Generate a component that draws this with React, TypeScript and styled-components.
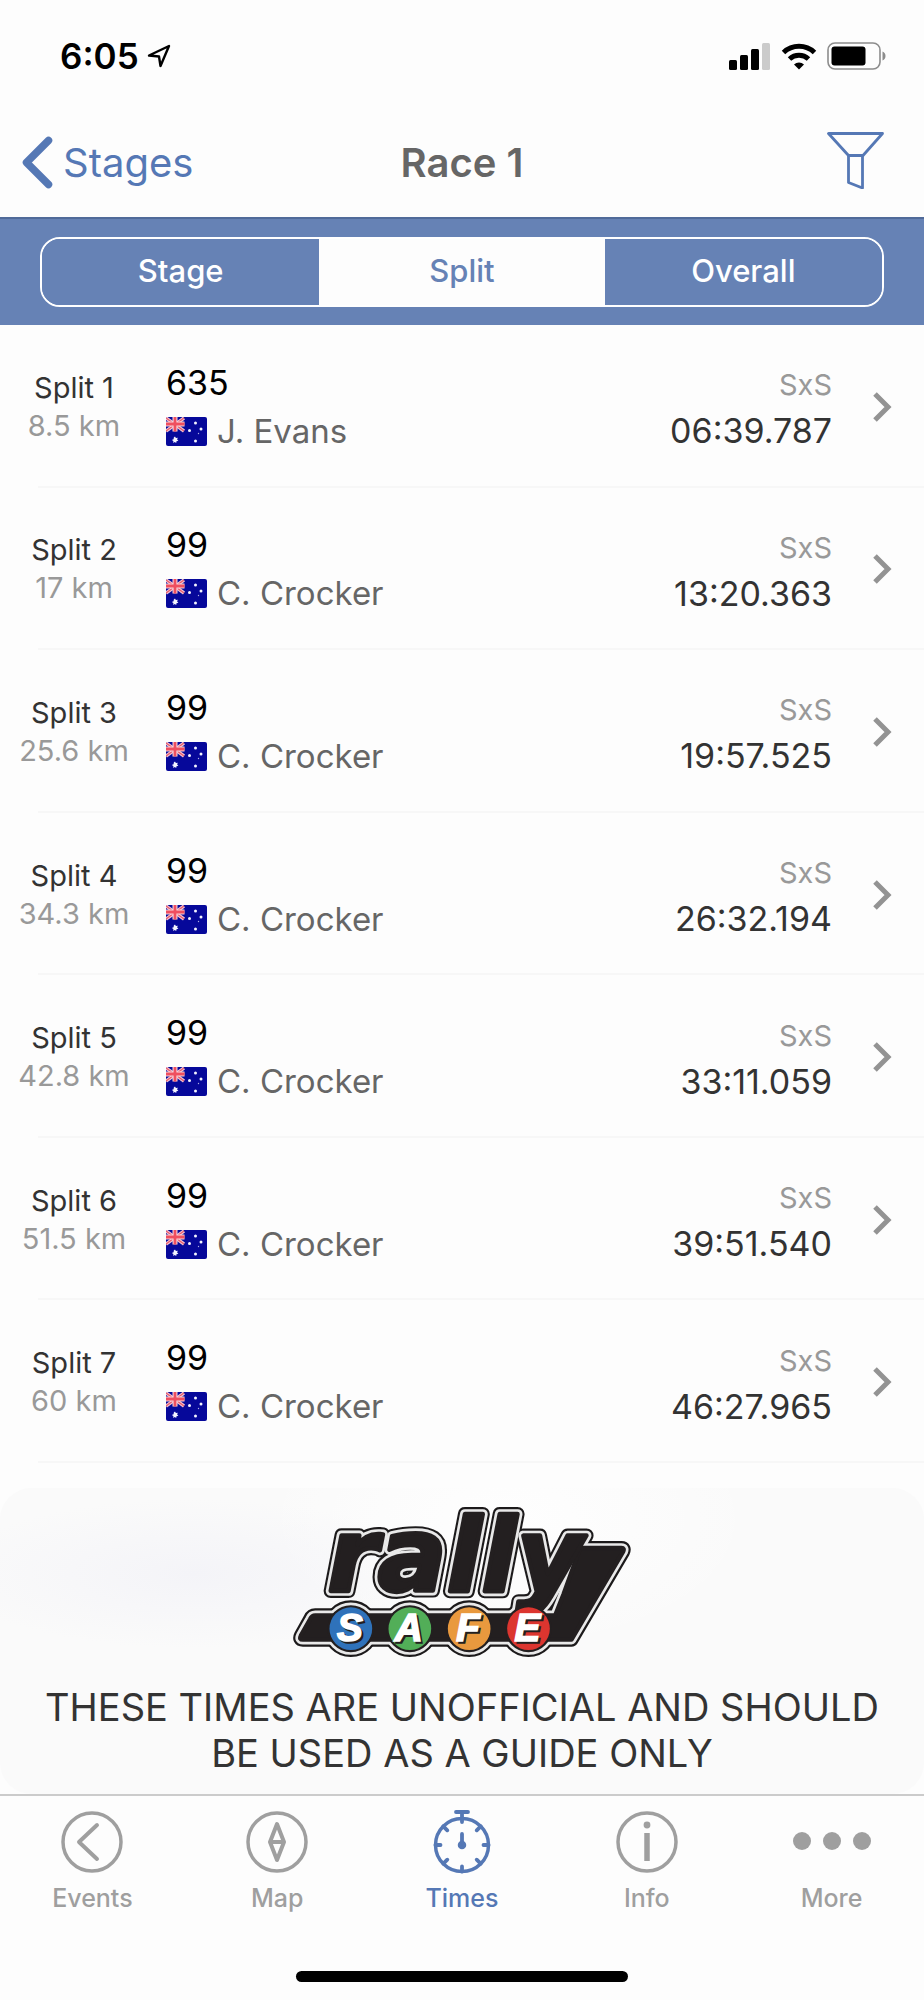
import React, { useState } from "react";
import styled, { createGlobalStyle } from "styled-components";

const blue = "#6682b5";
const accent = "#5578b5";
const grey = "#9f9f9f";

const GlobalStyle = createGlobalStyle`
  * { box-sizing: border-box; }
  body {
    margin: 0;
    background: #fdfdfd;
    color: #333;
    font-family: Inter, "Liberation Sans", sans-serif;
  }
  button { font: inherit; color: inherit; border: 0; padding: 0; background: none; cursor: pointer; }
  a { color: inherit; text-decoration: none; }
  svg { display: block; flex: none; }
`;

const Screen = styled.div`
  display: flex;
  flex-direction: column;
  min-height: 100vh;
`;

const StatusBar = styled.div`
  display: flex;
  align-items: center;
  justify-content: space-between;
  height: 112px;
  padding: 0 38px 0 60px;
  color: #000;
`;

const StatusGroup = styled.div<{ $gap: number }>`
  display: flex;
  align-items: center;
  gap: ${(p) => p.$gap}px;
`;

const Clock = styled.time`
  font-size: 35px;
  font-weight: 600;
  line-height: 40px;
`;

const NavBar = styled.header`
  display: grid;
  grid-template-columns: 1fr auto 1fr;
  align-items: center;
  height: 105px;
  padding: 0 22px 4px;
`;

const BackLink = styled.a`
  display: flex;
  align-items: center;
  gap: 10px;
  justify-self: start;
  color: ${accent};
  font-size: 40px;
  line-height: 48px;
`;

const Title = styled.h1`
  margin: 0;
  color: #666;
  font-size: 40px;
  font-weight: 600;
  line-height: 48px;
`;

const FilterButton = styled.button`
  justify-self: end;
  && { padding: 0 18px 4px; }
`;

const SegmentBand = styled.div`
  padding: 18px 40px;
  background: ${blue};
  border-top: 2px solid #506a99;
`;

const Segments = styled.div`
  display: grid;
  grid-template-columns: 35fr 36fr 35fr;
  height: 70px;
  overflow: hidden;
  border: 2px solid #fff;
  border-radius: 20px;
`;

const Segment = styled.button<{ $active: boolean }>`
  && {
    padding-bottom: 3px;
    background: ${(p) => (p.$active ? "#fdfdfd" : blue)};
    color: ${(p) => (p.$active ? blue : "#fff")};
    font-size: 31px;
    font-weight: 500;
  }
`;

const SplitList = styled.ol`
  display: flex;
  flex: 1;
  flex-direction: column;
  margin: 0 0 25px;
  padding: 0;
  list-style: none;
`;

const SplitItem = styled.li`
  display: flex;
  flex: 1;
  flex-direction: column;
  &::after {
    content: "";
    height: 2px;
    margin-left: 38px;
    background: #f7f7f7;
  }
`;

const SplitRow = styled.a`
  display: grid;
  flex: 1;
  grid-template-columns: 148px 1fr auto 92px;
  align-items: center;
  min-height: 150px;
  padding-top: 3px;
`;

const SplitCell = styled.div`
  text-align: center;
  font-size: 29px;
  line-height: 38px;
`;

const Distance = styled.div`
  color: #999;
`;

const Driver = styled.div`
  padding-left: 18px;
  color: #666;
  font-size: 33px;
  line-height: 49px;
`;

const CarNumber = styled.div`
  color: #000;
  font-size: 34px;
`;

const DriverName = styled.div`
  display: flex;
  align-items: center;
  gap: 10px;
`;

const Result = styled.div`
  padding-top: 3px;
  text-align: right;
  color: #333;
  font-size: 34px;
  line-height: 46px;
`;

const VehicleClass = styled.div`
  color: #999;
  font-size: 29px;
`;

const ChevronCell = styled.div`
  display: flex;
  justify-content: center;
  padding-left: 8px;
`;

const Banner = styled.section`
  display: flex;
  flex-direction: column;
  align-items: center;
  gap: 25px;
  padding: 21px 40px 18px;
  border-radius: 32px;
  background:
    radial-gradient(ellipse at 21% 28%, #f4f4f8 0, rgba(250, 250, 252, 0) 24%),
    radial-gradient(ellipse at 55% 10%, #fefefe 0, rgba(254, 254, 254, 0) 35%),
    #fafafa;
`;

const Notice = styled.p`
  max-width: 860px;
  margin: 0;
  text-align: center;
  font-size: 38px;
  line-height: 46px;
`;

const TabBar = styled.nav`
  display: grid;
  grid-template-columns: repeat(5, 1fr);
  padding-top: 12px;
  border-top: 2px solid #cbcbcb;
`;

const Tab = styled.a<{ $active: boolean }>`
  display: flex;
  flex-direction: column;
  align-items: center;
  gap: 8px;
  color: ${(p) => (p.$active ? accent : grey)};
  font-size: 25px;
  font-weight: 500;
  line-height: 32px;
`;

const HomeArea = styled.div`
  display: flex;
  justify-content: center;
  padding: 57px 0 18px;
`;

const HomeIndicator = styled.div`
  width: 36%;
  height: 11px;
  border-radius: 6px;
  background: #000;
`;

const LocationIcon = () => (
  <svg width="24" height="24" viewBox="0 0 24 24" fill="none" stroke="#000" strokeWidth="2.4" strokeLinejoin="round">
    <path d="M2 11.5 22 2 13.5 22 12 12.5Z" />
  </svg>
);

const SignalIcon = () => (
  <svg width="42" height="27" viewBox="0 0 42 27">
    <rect x="0" y="17" width="8" height="10" rx="1.5" />
    <rect x="11" y="12" width="8" height="15" rx="1.5" />
    <rect x="22" y="6" width="8" height="21" rx="1.5" />
    <rect x="33" y="0" width="8" height="27" rx="1.5" fill="#cbcbcb" />
  </svg>
);

const WifiIcon = () => (
  <svg width="36" height="27" viewBox="0 0 36 27" fill="none" stroke="#000" strokeWidth="5">
    <path d="M2.5 9.5a22.5 22.5 0 0 1 31 0" />
    <path d="M8.5 16a14 14 0 0 1 19 0" />
    <path d="M18 26.5 13 21.5a7.5 7.5 0 0 1 10 0Z" fill="#000" stroke="none" />
  </svg>
);

const BatteryIcon = () => (
  <svg width="59" height="28" viewBox="0 0 59 28">
    <rect x="1" y="1" width="52" height="26" rx="7" fill="none" stroke="#8c8c8c" strokeWidth="1.6" />
    <rect x="4.5" y="4.5" width="34" height="19" rx="3" />
    <path d="M55.5 9.5c4 1.5 4 7.5 0 9Z" fill="#8c8c8c" />
  </svg>
);

const BackIcon = () => (
  <svg width="31" height="53" viewBox="0 0 31 53" fill="none" stroke={accent} strokeWidth="7.5" strokeLinecap="round" strokeLinejoin="round">
    <path d="M26.5 4.5 4.5 26.5 26.5 48.5" />
  </svg>
);

const FilterIcon = () => (
  <svg width="57" height="57" viewBox="0 0 57 57" fill="none" stroke={accent} strokeWidth="2.8" strokeLinejoin="round">
    <path d="M1.5 1.5h54L36 23.5H21.5Z" />
    <path d="M21.5 23.5v27L35.5 56V23.5" />
  </svg>
);

const RowChevron = () => (
  <svg width="20" height="30" viewBox="0 0 20 30" fill="none" stroke="#939393" strokeWidth="5">
    <path d="M3 2 16 15 3 28" />
  </svg>
);

const FlagIcon = () => (
  <svg width="41" height="29" viewBox="0 0 41 29" role="img" aria-label="Australia">
    <rect width="41" height="29" rx="2" fill="#06089a" />
    <path d="M0 1 18 14M18 1 0 14" stroke="#f3c3cf" strokeWidth="3.4" />
    <path d="M0 1 18 14M18 1 0 14" stroke="#e85a6c" strokeWidth="1.2" />
    <path d="M9 0v14.5M0 7h18.5" stroke="#f8d5dc" strokeWidth="5" />
    <path d="M9 0v14.5M0 7h18.5" stroke="#ef4f5f" strokeWidth="2.8" />
    <g fill="#f4f4ff">
      <path d="m9 19.5.9 1.6 1.9-.4-.7 1.8 1.3 1.3-1.9.4-.3 1.9-1.4-1.200-1.600 1 .2-1.900-1.600-1 1.800-.7.200-1.800Z" />
      <circle cx="29.5" cy="6" r="1.5" />
      <circle cx="23.5" cy="13.5" r="1.5" />
      <circle cx="35" cy="12" r="1.5" />
      <circle cx="32.5" cy="16.5" r="0.7" opacity="0.7" />
      <circle cx="29.5" cy="24" r="1.5" />
    </g>
  </svg>
);

const badges = [
  { letter: "S", x: 212, fill: "#2f72ba" },
  { letter: "A", x: 389, fill: "#52ae58" },
  { letter: "F", x: 567, fill: "#e9993e" },
  { letter: "E", x: 745, fill: "#dc352f" },
];

const plate = "M105 373H825L850 310 900 171H1024Q1034 171 1029 182L874 446H68Q56 446 62 434L90 384Q95 373 105 373Z";

const logoLayers = [
  { color: "#1c1a1b", width: 42 },
  { color: "#e9e9e9", width: 29 },
  { color: "#231f20", width: 13 },
];

const RallySafeLogo = () => (
  <svg width="337" height="150" viewBox="42 54 1010 450" overflow="visible" role="img" aria-label="rally safe">
    <defs>
      <text id="wordmark" x="142" y="300" fontFamily="DejaVu Sans" fontWeight="700" fontStyle="italic" fontSize="306">
        rally
      </text>
    </defs>
    {logoLayers.map((layer) => (
      <g key={layer.width} fill={layer.color} stroke={layer.color} strokeWidth={layer.width} strokeLinejoin="round">
        <path d={plate} />
        {badges.map((b) => (
          <circle key={b.letter} cx={b.x} cy="413" r="64" />
        ))}
        <use href="#wordmark" />
      </g>
    ))}
    {badges.map((b) => (
      <g key={b.letter} fontFamily="Liberation Sans Narrow, Liberation Sans" fontWeight="700" fontStyle="italic" fontSize="116" textAnchor="middle">
        <defs>
          <text id={"badge-" + b.letter} x={b.x - 3} y="451" strokeWidth="5">
            {b.letter}
          </text>
        </defs>
        <circle cx={b.x} cy="413" r="64" fill={b.fill} />
        <use href={"#badge-" + b.letter} x="6" y="5" fill="#231f20" stroke="#231f20" />
        <use href={"#badge-" + b.letter} fill="#fff" stroke="#fff" />
      </g>
    ))}
  </svg>
);

const TabIcon = ({ children }: { children: React.ReactNode }) => (
  <svg width="84" height="66" viewBox="-42 -34 84 66" fill="none" stroke="currentColor" strokeWidth="3.5" strokeLinecap="round" strokeLinejoin="round">
    {children}
  </svg>
);

const EventsIcon = () => (
  <TabIcon>
    <circle r="29" />
    <path d="M5-17-13 0 5 17" strokeWidth="4" />
  </TabIcon>
);

const MapIcon = () => (
  <TabIcon>
    <circle r="29" />
    <path d="M0-18 7 0 0 18-7 0ZM-7 0H7" strokeWidth="4" />
  </TabIcon>
);

const TimesIcon = () => (
  <TabIcon>
    <circle cy="3" r="26.5" />
    <path d="M-6-30H6M0-30v10M0 29.5v-5M-26.5 3h5M26.5 3h-5M-18.7-15.7l4 4M18.7-15.7l-4 4M-18.7 21.7l4-4M18.7 21.7l-4-4M0-8V3" strokeWidth="3.8" />
    <circle cy="3" r="2.5" fill="currentColor" />
  </TabIcon>
);

const InfoIcon = () => (
  <TabIcon>
    <circle r="29" />
    <circle cy="-17" r="3.4" fill="currentColor" stroke="none" />
    <path d="M0-9V19" strokeWidth="5.5" strokeLinecap="butt" />
  </TabIcon>
);

const MoreIcon = () => (
  <TabIcon>
    <g fill="currentColor" stroke="none">
      <circle cx="-30" cy="-1" r="9" />
      <circle cy="-1" r="9" />
      <circle cx="30" cy="-1" r="9" />
    </g>
  </TabIcon>
);

const splits = [
  { name: "Split 1", distance: "8.5 km", car: "635", driver: "J. Evans", time: "06:39.787" },
  { name: "Split 2", distance: "17 km", car: "99", driver: "C. Crocker", time: "13:20.363" },
  { name: "Split 3", distance: "25.6 km", car: "99", driver: "C. Crocker", time: "19:57.525" },
  { name: "Split 4", distance: "34.3 km", car: "99", driver: "C. Crocker", time: "26:32.194" },
  { name: "Split 5", distance: "42.8 km", car: "99", driver: "C. Crocker", time: "33:11.059" },
  { name: "Split 6", distance: "51.5 km", car: "99", driver: "C. Crocker", time: "39:51.540" },
  { name: "Split 7", distance: "60 km", car: "99", driver: "C. Crocker", time: "46:27.965" },
];

const tabs = [
  { label: "Events", Icon: EventsIcon },
  { label: "Map", Icon: MapIcon },
  { label: "Times", Icon: TimesIcon },
  { label: "Info", Icon: InfoIcon },
  { label: "More", Icon: MoreIcon },
];

export default function App() {
  const [segment, setSegment] = useState("Split");
  return (
    <Screen>
      <GlobalStyle />
      <StatusBar>
        <StatusGroup $gap={8}>
          <Clock>6:05</Clock>
          <LocationIcon />
        </StatusGroup>
        <StatusGroup $gap={10}>
          <SignalIcon />
          <WifiIcon />
          <BatteryIcon />
        </StatusGroup>
      </StatusBar>
      <NavBar>
        <BackLink href="#stages">
          <BackIcon />
          Stages
        </BackLink>
        <Title>Race 1</Title>
        <FilterButton type="button" aria-label="Filter">
          <FilterIcon />
        </FilterButton>
      </NavBar>
      <SegmentBand>
        <Segments>
          {["Stage", "Split", "Overall"].map((s) => (
            <Segment key={s} type="button" $active={s === segment} aria-pressed={s === segment} onClick={() => setSegment(s)}>
              {s}
            </Segment>
          ))}
        </Segments>
      </SegmentBand>
      <SplitList>
        {splits.map((s) => (
          <SplitItem key={s.name}>
            <SplitRow href="#split">
              <SplitCell>
                {s.name}
                <Distance>{s.distance}</Distance>
              </SplitCell>
              <Driver>
                <CarNumber>{s.car}</CarNumber>
                <DriverName>
                  <FlagIcon />
                  {s.driver}
                </DriverName>
              </Driver>
              <Result>
                <VehicleClass>SxS</VehicleClass>
                {s.time}
              </Result>
              <ChevronCell>
                <RowChevron />
              </ChevronCell>
            </SplitRow>
          </SplitItem>
        ))}
      </SplitList>
      <Banner>
        <RallySafeLogo />
        <Notice>THESE TIMES ARE UNOFFICIAL AND SHOULD BE USED AS A GUIDE ONLY</Notice>
      </Banner>
      <TabBar>
        {tabs.map(({ label, Icon }) => (
          <Tab key={label} href={"#" + label.toLowerCase()} $active={label === "Times"}>
            <Icon />
            {label}
          </Tab>
        ))}
      </TabBar>
      <HomeArea>
        <HomeIndicator />
      </HomeArea>
    </Screen>
  );
}
